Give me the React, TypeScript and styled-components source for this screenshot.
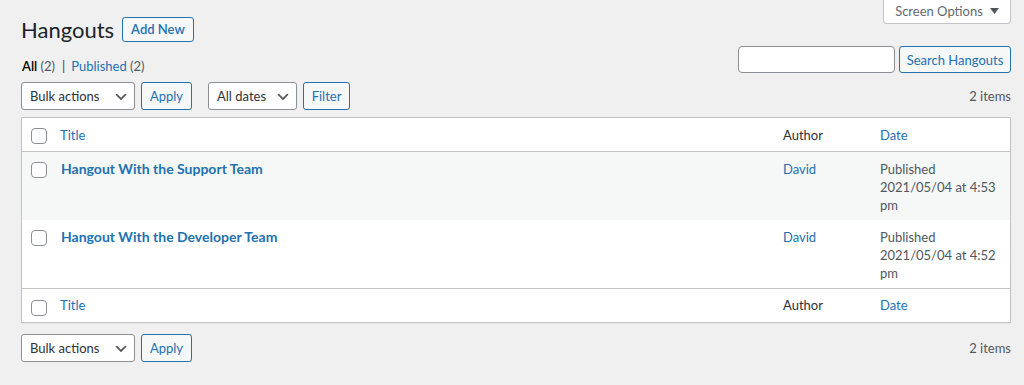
import React from 'react';
import styled, { createGlobalStyle } from 'styled-components';

const FONT = `Lato, "Open Sans", "Noto Sans", sans-serif`;

const Global = createGlobalStyle`
  html, body { margin: 0; padding: 0; background: #f0f0f1; }
  body {
    font-family: ${FONT};
    font-size: 13px;
    line-height: 1.4em;
    color: #3c434a;
  }
  * { box-sizing: border-box; }
`;

const Page = styled.div`
  display: flex;
  flex-direction: column;
  padding: 0 13px 0 21px;
`;

const Header = styled.div`
  display: flex;
  justify-content: space-between;
  align-items: flex-start;
`;

const TitleGroup = styled.div`
  display: flex;
  align-items: center;
  gap: 8px;
  padding-top: 17px;
`;

const PageTitle = styled.h1`
  margin: 0;
  font-size: 22px;
  font-weight: 400;
  line-height: 25px;
  color: #1d2327;
`;

const AddNew = styled.a`
  display: inline-flex;
  align-items: center;
  height: 25px;
  padding: 0 8px;
  border: 1px solid #2271b1;
  border-radius: 3px;
  background: #f6f7f7;
  color: #2271b1;
  font-size: 13px;
  font-weight: 600;
  text-decoration: none;
`;

const ScreenOptionsTab = styled.button`
  display: flex;
  align-items: center;
  justify-content: center;
  gap: 7px;
  width: 128px;
  height: 25px;
  margin-top: -1px;
  padding: 0;
  border: 1px solid #c3c4c7;
  border-top: none;
  border-radius: 0 0 4px 4px;
  background: #fff;
  color: #646970;
  font-family: ${FONT};
  font-size: 13px;
`;

const FilterRow = styled.div`
  display: flex;
  justify-content: space-between;
  align-items: flex-start;
  margin-top: 4px;
`;

const SubSub = styled.ul`
  display: flex;
  margin: 0;
  padding: 10px 0 0 1px;
  list-style: none;
  line-height: 20px;
  font-size: 13px;
  color: #646970;
`;

const SubItem = styled.li<{ $current?: boolean }>`
  color: ${(p) => (p.$current ? '#000' : '#2271b1')};
  font-weight: ${(p) => (p.$current ? 600 : 400)};
`;

const Count = styled.span`
  color: #50575e;
  font-weight: 400;
`;

const Sep = styled.li`
  margin: 0 6px 0 7px;
  color: #3c434a;
`;

const SearchBox = styled.div`
  display: flex;
  gap: 4px;
`;

const SearchInput = styled.input`
  width: 157px;
  height: 27px;
  border: 1px solid #8c8f94;
  border-radius: 4px;
  background: #fff;
  padding: 0 8px;
`;

const Button = styled.button<{ $w?: number; $h?: number }>`
  display: inline-flex;
  align-items: center;
  justify-content: center;
  width: ${(p) => (p.$w ? `${p.$w}px` : 'auto')};
  height: ${(p) => p.$h ?? 28}px;
  padding: 0 8px;
  border: 1px solid #2271b1;
  border-radius: 3px;
  background: #f6f7f7;
  color: #2271b1;
  font-family: ${FONT};
  font-size: 13px;
  white-space: nowrap;
`;

const Tablenav = styled.div<{ $top: number }>`
  display: flex;
  align-items: center;
  justify-content: space-between;
  height: 28px;
  margin-top: ${(p) => p.$top}px;
`;

const Actions = styled.div`
  display: flex;
  align-items: center;
  gap: 6px;
`;

const ActionGroups = styled.div`
  display: flex;
  gap: 16px;
`;

const SelectWrap = styled.div<{ $w: number }>`
  position: relative;
  width: ${(p) => p.$w}px;
  height: 28px;
`;

const Select = styled.select`
  appearance: none;
  width: 100%;
  height: 100%;
  padding: 0 24px 0 8px;
  border: 1px solid #8c8f94;
  border-radius: 3px;
  background: #fff;
  color: #2c3338;
  font-family: ${FONT};
  font-size: 13px;
`;

const Chevron = styled.svg`
  position: absolute;
  right: 6px;
  top: 7px;
  pointer-events: none;
`;

const DisplayingNum = styled.span`
  color: #50575e;
  font-size: 13px;
`;

const Table = styled.table`
  width: 100%;
  margin-top: 7px;
  border: 1px solid #c3c4c7;
  border-spacing: 0;
  table-layout: fixed;
  background: #fff;
  box-shadow: 0 1px 1px rgba(0, 0, 0, 0.04);
`;

const Th = styled.th<{ $w?: number; $pos: 'head' | 'foot' }>`
  width: ${(p) => (p.$w ? `${p.$w}px` : 'auto')};
  padding: ${(p) => (p.$pos === 'head' ? '9px 10px 7px' : '8px 10px')};
  line-height: 17px;
  text-align: left;
  font-weight: 400;
  font-size: 13px;
  color: #2c3338;
  ${(p) => (p.$pos === 'head' ? 'border-bottom: 1px solid #c3c4c7;' : 'border-top: 1px solid #c3c4c7;')}
`;

const CheckTh = styled.td<{ $pos: 'head' | 'foot' | 'body' }>`
  width: 28px;
  padding: ${(p) => (p.$pos === 'foot' ? '11px' : '10px')} 0 0 9px;
  vertical-align: top;
  ${(p) =>
    p.$pos === 'head'
      ? 'border-bottom: 1px solid #c3c4c7;'
      : p.$pos === 'foot'
      ? 'border-top: 1px solid #c3c4c7;'
      : ''}
`;

const Box = styled.span`
  display: block;
  width: 16px;
  height: 16px;
  border: 1px solid #8c8f94;
  border-radius: 4px;
  background: #fff;
`;

const Row = styled.tr<{ $alt?: boolean }>`
  background: ${(p) => (p.$alt ? '#f6f7f7' : '#fff')};
`;

const Td = styled.td`
  padding: 8px 10px 6px;
  line-height: 18px;
  vertical-align: top;
  color: #50575e;
  font-size: 13px;
`;

const Link = styled.a`
  color: #2271b1;
  text-decoration: none;
`;

const RowTitle = styled.a`
  display: block;
  padding-left: 1px;
  color: #2271b1;
  font-size: 14px;
  font-weight: 700;
  text-decoration: none;
`;

const ChevronIcon = () => (
  <Chevron width="16" height="16" viewBox="0 0 20 20">
    <path d="M5 6l5 5 5-5 2 1-7 7-7-7 2-1z" fill="#555" />
  </Chevron>
);

const Dropdown = ({ label, w }: { label: string; w: number }) => (
  <SelectWrap $w={w}>
    <Select defaultValue={label}>
      <option>{label}</option>
    </Select>
    <ChevronIcon />
  </SelectWrap>
);

const rows = [
  { title: 'Hangout With the Support Team', time: '4:53' },
  { title: 'Hangout With the Developer Team', time: '4:52' },
];

const HeaderCells = ({ pos }: { pos: 'head' | 'foot' }) => (
  <tr>
    <CheckTh as="td" $pos={pos}>
      <Box />
    </CheckTh>
    <Th $pos={pos}>
      <Link href="#">Title</Link>
    </Th>
    <Th $pos={pos} $w={97}>
      Author
    </Th>
    <Th $pos={pos} $w={140}>
      <Link href="#">Date</Link>
    </Th>
  </tr>
);

export default function App() {
  return (
    <>
      <Global />
      <Page>
        <Header>
          <TitleGroup>
            <PageTitle>Hangouts</PageTitle>
            <AddNew href="#">Add New</AddNew>
          </TitleGroup>
          <ScreenOptionsTab>
            Screen Options
            <svg width="9" height="6" viewBox="0 0 9 6">
              <path d="M0 0h9L4.5 6z" fill="#50575e" />
            </svg>
          </ScreenOptionsTab>
        </Header>

        <FilterRow>
          <SubSub>
            <SubItem $current>
              All <Count>(2)</Count>
            </SubItem>
            <Sep>|</Sep>
            <SubItem>
              Published <Count>(2)</Count>
            </SubItem>
          </SubSub>
          <SearchBox>
            <SearchInput type="search" />
            <Button $w={112} $h={27}>
              Search Hangouts
            </Button>
          </SearchBox>
        </FilterRow>

        <Tablenav $top={6}>
          <ActionGroups>
            <Actions>
              <Dropdown label="Bulk actions" w={114} />
              <Button $w={51}>Apply</Button>
            </Actions>
            <Actions>
              <Dropdown label="All dates" w={89} />
              <Button $w={47}>Filter</Button>
            </Actions>
          </ActionGroups>
          <DisplayingNum>2 items</DisplayingNum>
        </Tablenav>

        <Table>
          <thead>
            <HeaderCells pos="head" />
          </thead>
          <tbody>
            {rows.map((r, i) => (
              <Row key={r.title} $alt={i === 0}>
                <CheckTh $pos="body">
                  <Box />
                </CheckTh>
                <Td>
                  <RowTitle href="#">{r.title}</RowTitle>
                </Td>
                <Td>
                  <Link href="#">David</Link>
                </Td>
                <Td>
                  Published
                  <br />
                  2021/05/04 at {r.time} pm
                </Td>
              </Row>
            ))}
          </tbody>
          <tfoot>
            <HeaderCells pos="foot" />
          </tfoot>
        </Table>

        <Tablenav $top={11}>
          <Actions>
            <Dropdown label="Bulk actions" w={114} />
            <Button $w={51}>Apply</Button>
          </Actions>
          <DisplayingNum>2 items</DisplayingNum>
        </Tablenav>
      </Page>
    </>
  );
}
